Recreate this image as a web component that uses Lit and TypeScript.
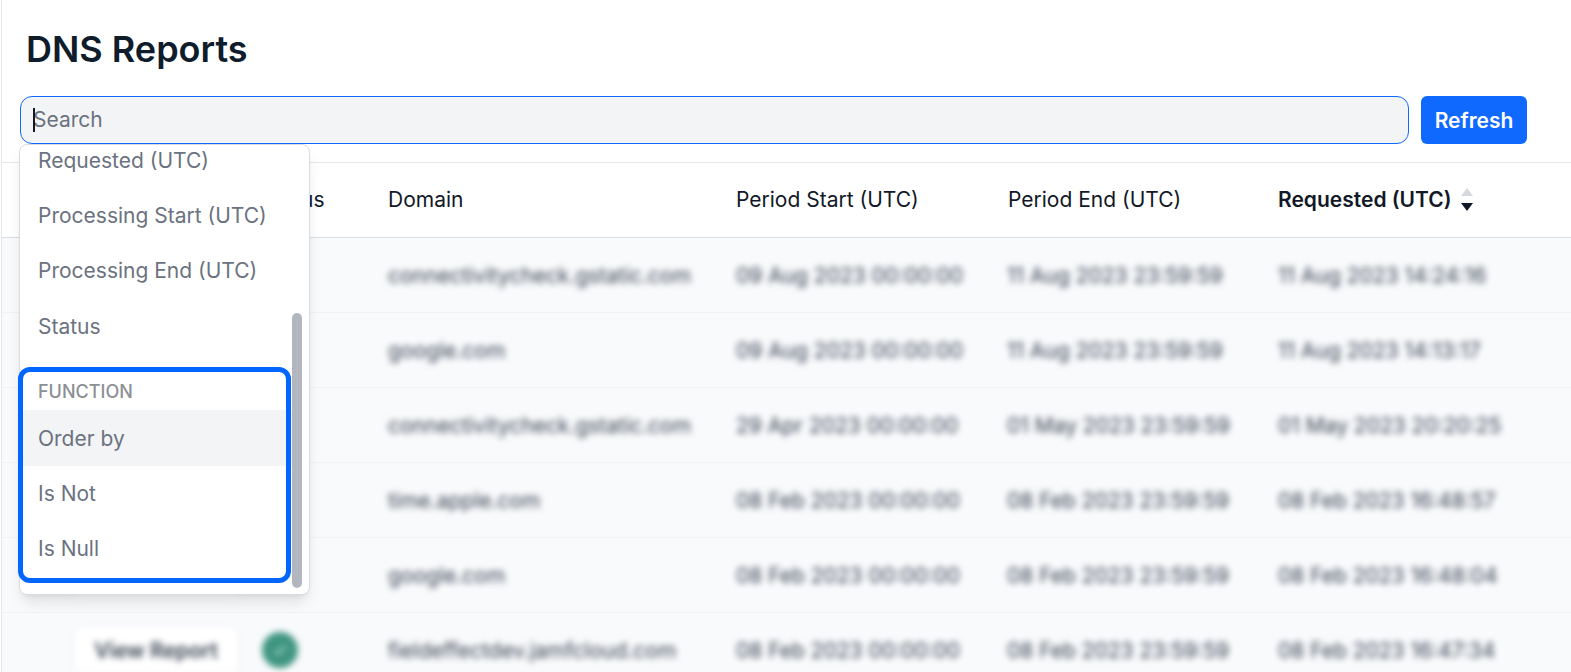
import { css, html, LitElement, nothing } from "lit";
import { customElement } from "lit/decorators.js";

const rows = [
	{ done: true, cells: ["connectivitycheck.gstatic.com", "09 Aug 2023 00:00:00", "11 Aug 2023 23:59:59", "11 Aug 2023 14:24:16"] },
	{ done: true, cells: ["google.com", "09 Aug 2023 00:00:00", "11 Aug 2023 23:59:59", "11 Aug 2023 14:13:17"] },
	{ done: true, cells: ["connectivitycheck.gstatic.com", "29 Apr 2023 00:00:00", "01 May 2023 23:59:59", "01 May 2023 20:20:25"] },
	{ done: true, cells: ["time.apple.com", "08 Feb 2023 00:00:00", "08 Feb 2023 23:59:59", "08 Feb 2023 16:48:57"] },
	{ done: false, cells: ["google.com", "08 Feb 2023 00:00:00", "08 Feb 2023 23:59:59", "08 Feb 2023 16:48:04"] },
	{ done: true, cells: ["fieldeffectdev.jamfcloud.com", "08 Feb 2023 00:00:00", "08 Feb 2023 23:59:59", "08 Feb 2023 16:47:34"] },
];

const columns = ["Requested (UTC)", "Processing Start (UTC)", "Processing End (UTC)", "Status"];
const functions = ["Order by", "Is Not", "Is Null"];

@customElement("app-root")
export class AppRoot extends LitElement {
	static override styles = css`
		:host {
			display: block;
			height: 672px;
			overflow: hidden;
			position: relative;
			background: #fff;
			font-family: Inter, "Liberation Sans", sans-serif;
			color: #111827;
		}

		.page {
			border-left: 1px solid #e5e7eb;
			margin-left: 1px;
		}

		h1 {
			margin: 0;
			padding: 27px 0 0 24px;
			height: 67px;
			box-sizing: border-box;
			font-size: 36px;
			line-height: 44px;
			font-weight: 600;
			color: #0f1c2b;
		}

		.toolbar {
			display: flex;
			gap: 12px;
			padding: 29px 0 18px 18px;
			width: 1507px;
		}

		.search {
			position: relative;
			flex: 1;
			height: 48px;
			box-sizing: border-box;
			display: flex;
			align-items: center;
			padding: 0 0 2px 12px;
			border: 1px solid #0f69ff;
			border-radius: 12px;
			background: #f3f4f6;
			font-size: 21px;
			color: #6b7280;
		}

		.caret {
			position: absolute;
			left: 12px;
			top: 11px;
			width: 2px;
			height: 24px;
			background: #111827;
		}

		.refresh {
			width: 106px;
			height: 48px;
			border: none;
			border-radius: 6px;
			background: #0f69ff;
			color: #fff;
			font: 600 21px Inter, sans-serif;
		}

		.head,
		.row {
			display: grid;
			grid-template-columns: 72px 188px 126px 348px 271px 271px 1fr;
			align-items: center;
			height: 75px;
			box-sizing: border-box;
			border-bottom: 1px solid #d9dce1;
		}

		.head {
			border-top: 1px solid #e5e7eb;
			height: 76px;
			padding-bottom: 2px;
			font-size: 21px;
		}

		.head .status {
			grid-column: 3;
		}

		.head .domain {
			grid-column: 4;
		}

		.head .end {
			padding-left: 1px;
		}

		.sorted {
			display: flex;
			align-items: center;
			gap: 9px;
			font-weight: 600;
		}

		.sorter {
			display: flex;
			flex-direction: column;
			gap: 7px;
		}

		.up,
		.down {
			width: 0;
			height: 0;
			border-left: 6px solid transparent;
			border-right: 6px solid transparent;
		}

		.up {
			border-bottom: 8px solid #d5d8dc;
		}

		.down {
			border-top: 8px solid #111827;
		}

		.row {
			background: #f9fafc;
			border-bottom-color: #f1f2f4;
			font-size: 21px;
			color: #374151;
		}

		.row > * {
			filter: blur(3px);
		}

		.view {
			grid-column: 2;
			justify-self: start;
			width: 164px;
			height: 48px;
			box-sizing: border-box;
			border: 1px solid #eceef1;
			border-radius: 6px;
			background: #fff;
			display: flex;
			align-items: center;
			justify-content: center;
			font-weight: 600;
		}

		.check {
			width: 36px;
			height: 36px;
			border-radius: 50%;
			background: #3f9680;
			display: flex;
			align-items: center;
			justify-content: center;
		}

		.cell {
			white-space: nowrap;
		}

		.menu {
			position: absolute;
			left: 19px;
			top: 144px;
			width: 291px;
			height: 451px;
			box-sizing: border-box;
			overflow: hidden;
			border: 1px solid #d9dce1;
			border-radius: 8px;
			background: #fff;
			box-shadow: 0 10px 15px -3px rgba(0, 0, 0, 0.1), 0 4px 6px -4px rgba(0, 0, 0, 0.1);
			font-size: 21px;
			color: #6b7280;
		}

		.list {
			margin-top: -12.4px;
			width: 272px;
		}

		.item {
			height: 55.3px;
			display: flex;
			align-items: center;
			padding-left: 18px;
		}

		.item.fn {
			height: 55.4px;
		}

		.item.active {
			background: #f3f4f6;
		}

		.label {
			height: 56.6px;
			box-sizing: border-box;
			padding: 28px 0 0 18px;
			font-size: 18px;
			line-height: 20px;
			font-weight: 500;
			color: #8c8f94;
		}

		.thumb {
			position: absolute;
			left: 272px;
			top: 168px;
			width: 10px;
			height: 275px;
			border-radius: 5px;
			background: #b2b7bf;
		}

		.callout {
			position: absolute;
			left: 18px;
			top: 367px;
			width: 273px;
			height: 216px;
			box-sizing: border-box;
			border: 5px solid #0066ff;
			border-radius: 12px;
		}
	`;

	override render() {
		return html`
			<div class="page">
				<h1>DNS Reports</h1>
				<div class="toolbar">
					<div class="search"><span class="caret"></span>Search</div>
					<button class="refresh">Refresh</button>
				</div>
				<div class="head">
					<span class="status">Status</span>
					<span class="domain">Domain</span>
					<span>Period Start (UTC)</span>
					<span class="end">Period End (UTC)</span>
					<span class="sorted">
						Requested (UTC)
						<span class="sorter"><span class="up"></span><span class="down"></span></span>
					</span>
				</div>
				${rows.map(
					(row) => html`
						<div class="row">
							<span class="view">View Report</span>
							<span>
								${row.done
									? html`<span class="check">
											<svg width="18" height="18" viewBox="0 0 24 24" fill="none" stroke="#a9d5c7" stroke-width="3">
												<path d="M5 13l4 4L19 7"></path>
											</svg>
										</span>`
									: nothing}
							</span>
							${row.cells.map((text) => html`<span class="cell">${text}</span>`)}
						</div>
					`,
				)}
			</div>
			<div class="menu">
				<div class="list">
					${columns.map((name) => html`<div class="item">${name}</div>`)}
					<div class="label">FUNCTION</div>
					${functions.map(
						(name, i) => html`<div class="item fn ${i === 0 ? "active" : ""}">${name}</div>`,
					)}
				</div>
				<div class="thumb"></div>
			</div>
			<div class="callout"></div>
		`;
	}
}
